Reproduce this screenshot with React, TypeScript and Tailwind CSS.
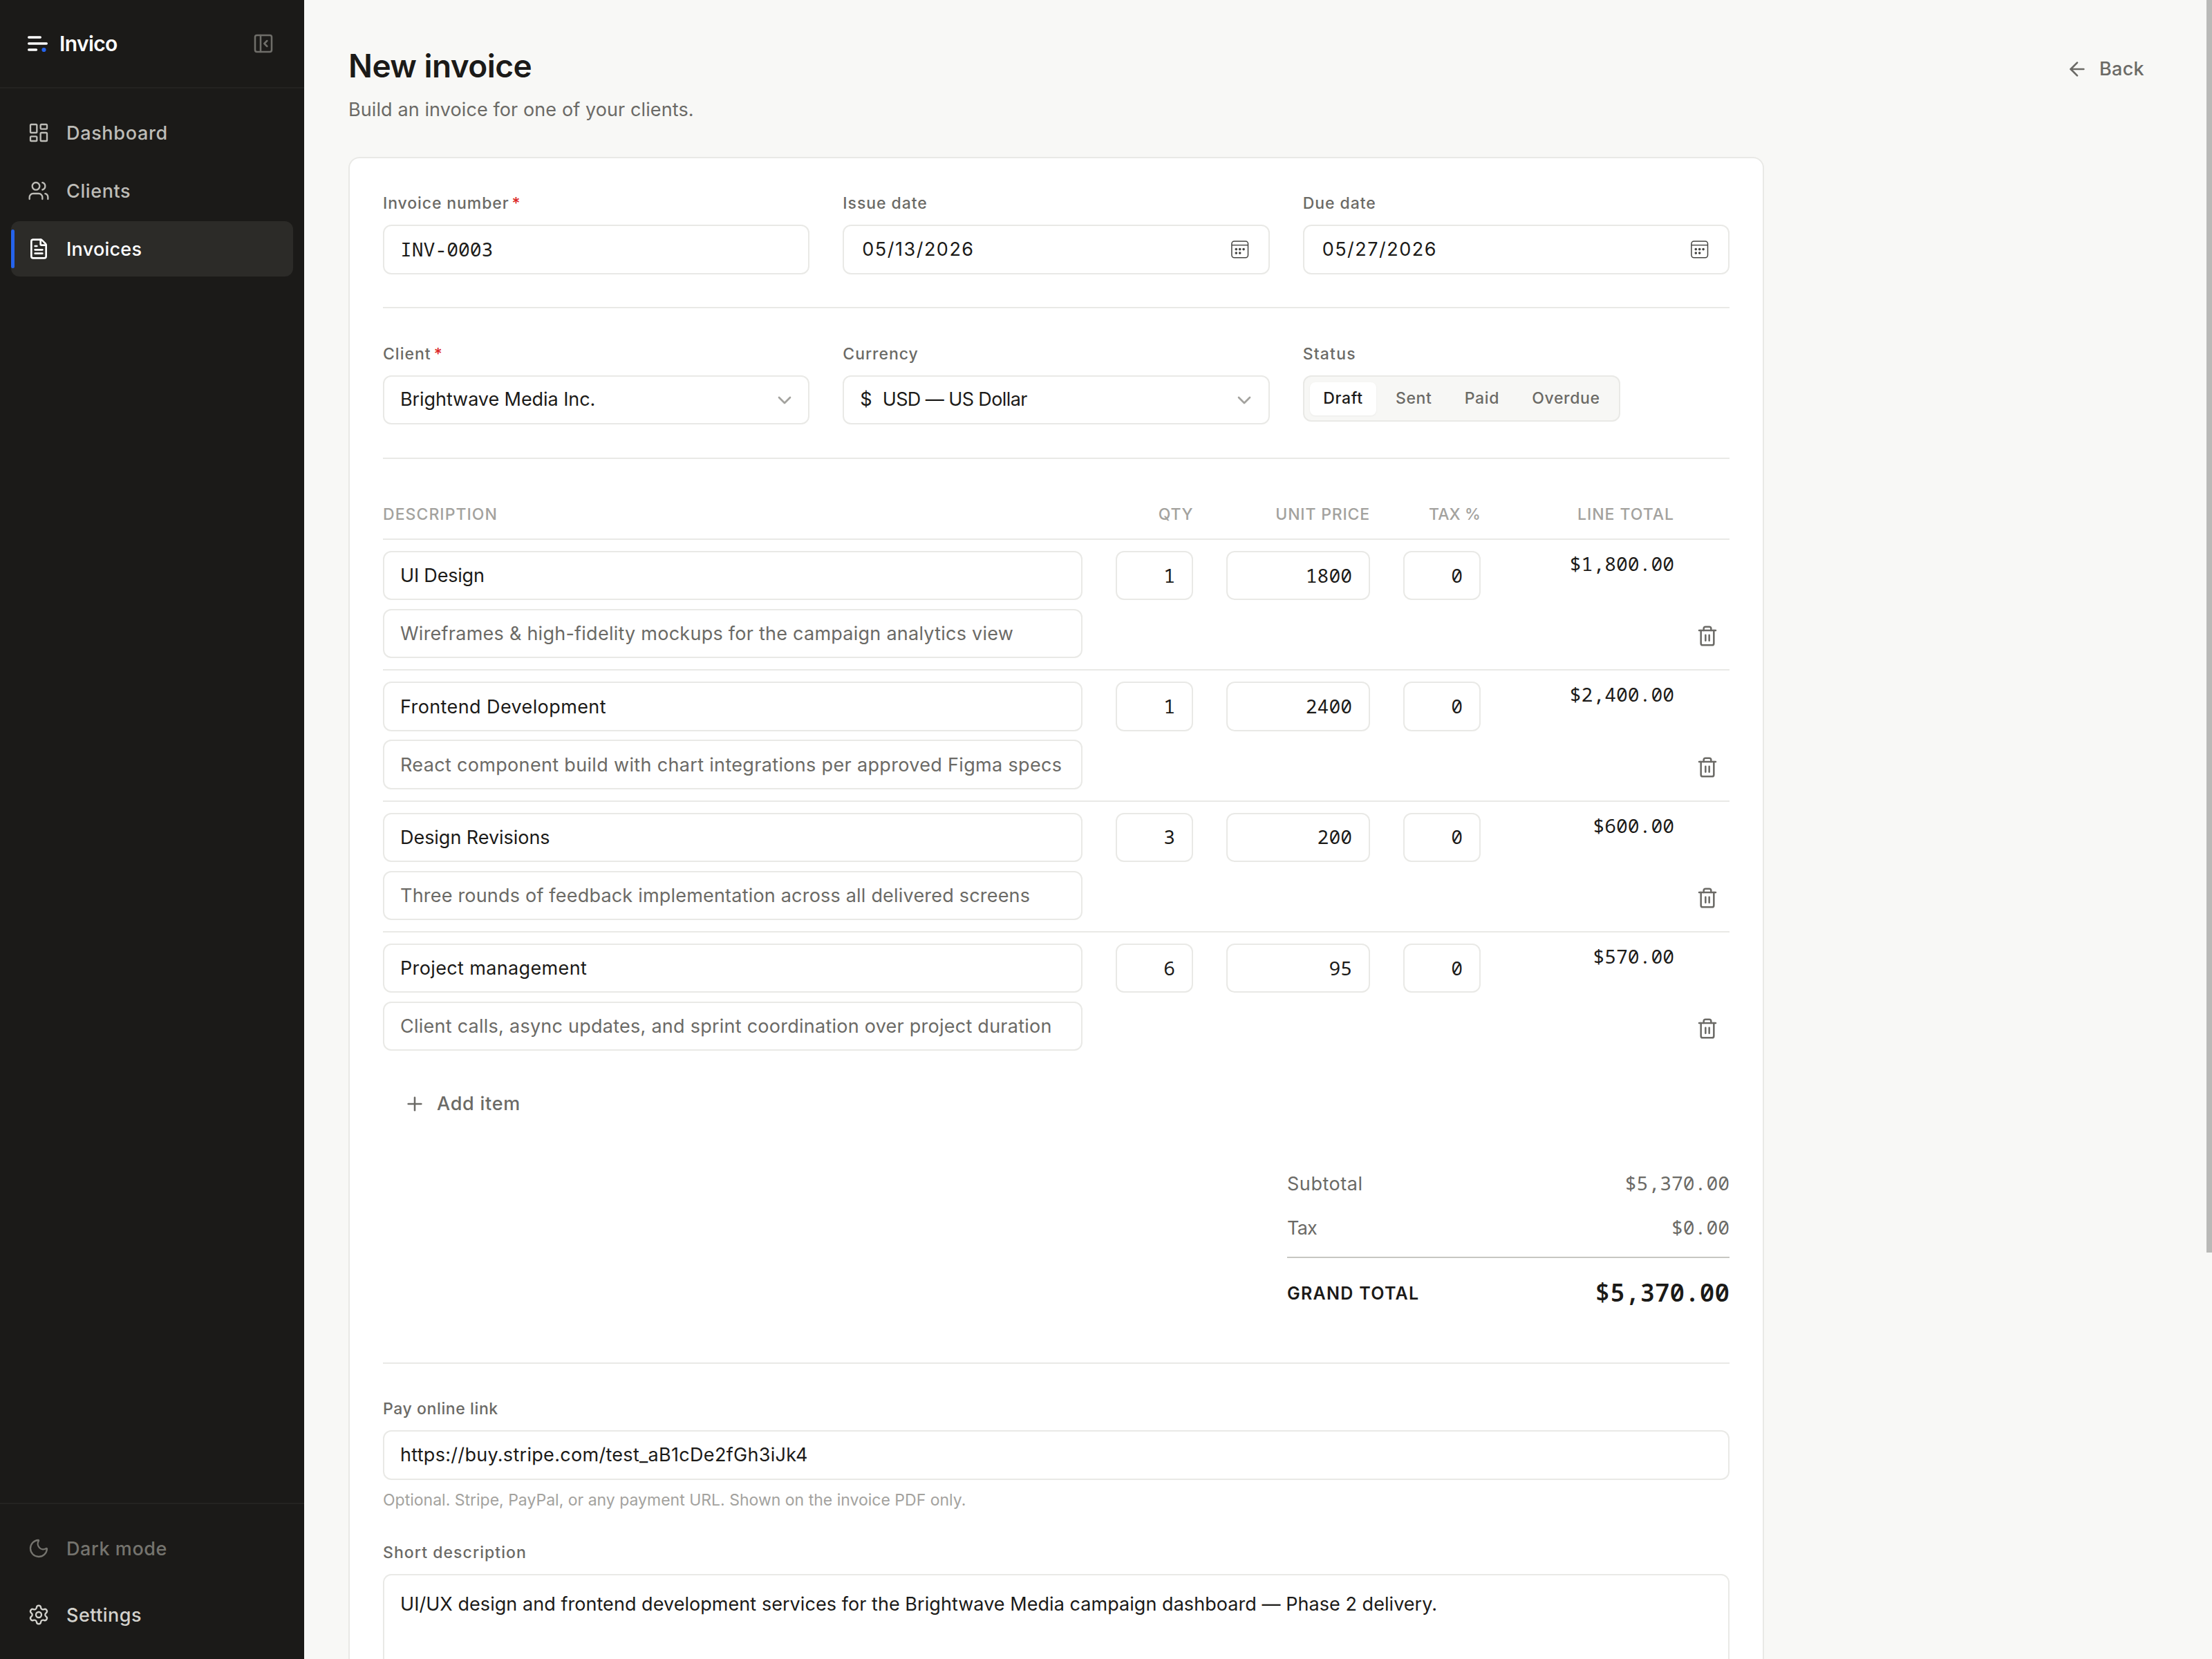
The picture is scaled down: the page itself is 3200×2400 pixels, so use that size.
import { ArrowLeft, ChevronDown, FileText, LayoutDashboard, Moon, PanelLeftClose, Plus, Settings, Trash2, Users } from "lucide-react"
import type { ReactNode } from "react"
import clsx from "clsx"

const navItems = [
  { icon: LayoutDashboard, label: "Dashboard", active: false, tracking: "tracking-[0.67px]" },
  { icon: Users, label: "Clients", active: false, tracking: "tracking-[0.59px]" },
  { icon: FileText, label: "Invoices", active: true, tracking: "tracking-[0.25px]" },
]

const lineItems = [
  {
    name: "UI Design",
    nameTracking: "tracking-[-0.19px]",
    details: "Wireframes & high-fidelity mockups for the campaign analytics view",
    detailsTracking: "tracking-[0.25px]",
    qty: "1",
    price: "1800",
    tax: "0",
    total: "$1,800.00",
  },
  {
    name: "Frontend Development",
    nameTracking: "tracking-[0.4px]",
    details: "React component build with chart integrations per approved Figma specs",
    detailsTracking: "tracking-[0.33px]",
    qty: "1",
    price: "2400",
    tax: "0",
    total: "$2,400.00",
  },
  {
    name: "Design Revisions",
    nameTracking: "tracking-[-0.04px]",
    details: "Three rounds of feedback implementation across all delivered screens",
    detailsTracking: "tracking-[0.2px]",
    qty: "3",
    price: "200",
    tax: "0",
    total: "$600.00",
  },
  {
    name: "Project management",
    nameTracking: "tracking-[0.36px]",
    details: "Client calls, async updates, and sprint coordination over project duration",
    detailsTracking: "tracking-[0.25px]",
    qty: "6",
    price: "95",
    tax: "0",
    total: "$570.00",
  },
]

const statuses = [
  { label: "Draft", active: true },
  { label: "Sent", active: false },
  { label: "Paid", active: false },
  { label: "Overdue", active: false },
]

const mono = "font-['Noto_Sans_Mono','Liberation_Mono',monospace] [font-feature-settings:'zero'] text-[28px]"
const tableGrid = "grid grid-cols-[1012px_112px_208px_112px_232px] gap-x-12"

function Logo() {
  return (
    <svg width="32" height="32" viewBox="0 0 32 32" fill="none" className="shrink-0">
      <path d="M1.7 7h16.6M1.7 16h25.6M1.7 25h10.8" stroke="#fff" strokeWidth="3.4" strokeLinecap="round" />
      <circle cx="23.5" cy="25" r="3.1" fill="#2563eb" />
    </svg>
  )
}

function CalendarIcon() {
  return (
    <svg width="26" height="26" viewBox="0 0 26 26" fill="none" className="shrink-0">
      <rect x="0.9" y="0.9" width="23.6" height="23.8" rx="3.6" stroke="#444442" strokeWidth="1.5" />
      <path d="M1 6.6h23.5" stroke="#444442" strokeWidth="1.4" />
      <g fill="#444442">
        <circle cx="7.3" cy="12.6" r="1.8" />
        <circle cx="12.7" cy="12.6" r="1.8" />
        <circle cx="18.1" cy="12.6" r="1.8" />
        <circle cx="7.3" cy="18.1" r="1.8" />
        <circle cx="12.7" cy="18.1" r="1.8" />
      </g>
    </svg>
  )
}

function Label({ children, className, required }: { children: ReactNode; className?: string; required?: boolean }) {
  return (
    <div className="flex h-8 items-center gap-1 text-[23px] font-[450] text-[#6b6a66]">
      <span className={className}>{children}</span>
      {required && <span className="text-[#dc2626]">*</span>}
    </div>
  )
}

function Box({ children, className }: { children?: ReactNode; className?: string }) {
  return (
    <div className={clsx("flex items-center rounded-xl border-2 border-[#e9e9e6] bg-white pl-[23px] whitespace-nowrap", className)}>
      {children}
    </div>
  )
}

function Sidebar() {
  return (
    <aside className="flex h-full w-[440px] shrink-0 flex-col bg-[#1b1a18]">
      <div className="flex h-32 items-center border-b-2 border-[#242321] pr-[43px] pl-10">
        <Logo />
        <span className="ml-[14px] text-[30px] font-semibold tracking-[-0.62px] text-white">Invico</span>
        <PanelLeftClose size={32} strokeWidth={1.9} className="ml-auto text-[#6f6e69]" />
      </div>

      <nav className="flex flex-col gap-1 px-4 pt-6">
        {navItems.map((item) => (
          <div
            key={item.label}
            className={clsx(
              "relative flex h-20 items-center gap-6 rounded-xl pl-6 text-[27px]",
              item.active ? "bg-[#2c2b28] font-medium text-white" : "font-[450] text-[#bdbcb7]",
            )}
          >
            {item.active && <span className="absolute top-3 left-0 h-14 w-[5px] rounded-[3px] bg-[#2563eb]" />}
            <item.icon size={32} strokeWidth={item.active ? 2 : 1.75} />
            <span className={clsx("pt-0.5", item.tracking)}>{item.label}</span>
          </div>
        ))}
      </nav>

      <div className="mt-auto flex flex-col gap-4 border-t-2 border-[#242321] px-4 py-6 text-[27px]">
        <div className="flex h-20 items-center gap-6 pl-6 font-[450] text-[#75746e]">
          <Moon size={32} strokeWidth={1.75} />
          <span className="pt-0.5 tracking-[0.57px]">Dark mode</span>
        </div>
        <div className="flex h-20 items-center gap-6 pl-6 font-medium text-[#d3d2cd]">
          <Settings size={32} strokeWidth={1.75} />
          <span className="pt-0.5 tracking-[0.47px]">Settings</span>
        </div>
      </div>
    </aside>
  )
}

function DateField({ label, value, tracking }: { label: string; value: string; tracking: string }) {
  return (
    <div className="flex flex-col gap-[15px]">
      <Label className="tracking-[0.95px]">{label}</Label>
      <Box className="h-[72px] justify-between pr-7">
        <span className={clsx("pl-[3px]", tracking)}>{value}</span>
        <CalendarIcon />
      </Box>
    </div>
  )
}

export default function App() {
  return (
    <div className="flex h-[2400px] w-[3200px] overflow-hidden bg-[#f8f8f6] font-[Inter,sans-serif] text-[27px] text-[#1b1a18]">
      <Sidebar />

      <main className="flex flex-1 flex-col pt-[65px] pl-16">
        <div className="flex justify-between pr-[90px]">
          <div>
            <h1 className="flex h-[60px] items-center text-[46px] font-semibold tracking-[-0.55px]">New invoice</h1>
            <p className="mt-[11px] flex h-11 items-center pt-0.5 tracking-[0.1px] text-[#6b6a66]">
              Build an invoice for one of your clients.
            </p>
          </div>
          <div className="flex h-[70px] items-center gap-4 font-[450] text-[#6b6a66]">
            <ArrowLeft size={32} strokeWidth={2} />
            <span className="tracking-[0.3px]">Back</span>
          </div>
        </div>

        <div className="mt-[47px] h-[2300px] w-[2048px] shrink-0 rounded-2xl border-2 border-[#e9e9e6] bg-white px-12 pt-[49px]">
          <div className="grid grid-cols-3 gap-12 border-b-2 border-[#e9e9e6] pb-[47px]">
            <div className="flex flex-col gap-[15px]">
              <Label className="tracking-[0.9px]" required>
                Invoice number
              </Label>
              <Box className={clsx("h-[72px] pb-0.5", mono)}>INV-0003</Box>
            </div>
            <DateField label="Issue date" value="05/13/2026" tracking="tracking-[1.5px]" />
            <DateField label="Due date" value="05/27/2026" tracking="tracking-[1.5px]" />
          </div>

          <div className="grid grid-cols-3 gap-12 border-b-2 border-[#e9e9e6] pt-[50px] pb-12">
            <div className="flex flex-col gap-[15px]">
              <Label className="tracking-[1px]" required>
                Client
              </Label>
              <Box className="h-[71px] justify-between pr-[18px]">
                <span className="tracking-[-0.07px]">Brightwave Media Inc.</span>
                <ChevronDown size={32} strokeWidth={2} className="text-[#a3a29e]" />
              </Box>
            </div>
            <div className="flex flex-col gap-[15px]">
              <Label className="tracking-[0.95px]">Currency</Label>
              <Box className="h-[71px] justify-between pr-[19px]">
                <span className="flex gap-[15px]">
                  <span>$</span>
                  <span className="tracking-[-0.6px]">USD — US Dollar</span>
                </span>
                <ChevronDown size={32} strokeWidth={2} className="text-[#a3a29e]" />
              </Box>
            </div>
            <div className="flex flex-col items-start gap-[15px]">
              <Label className="tracking-[1.2px]">Status</Label>
              <div className="flex h-[67px] items-center gap-2 rounded-xl border-2 border-[#e9e9e6] bg-[#f7f7f5] px-2 text-[23px] tracking-[0.65px]">
                {statuses.map((s) => (
                  <span
                    key={s.label}
                    className={clsx(
                      "flex h-12 items-center rounded-lg px-[19.6px]",
                      s.active
                        ? "bg-white font-medium text-[#1b1a18] shadow-[0_1px_3px_rgba(0,0,0,0.05)]"
                        : "font-[450] text-[#6b6a66]",
                    )}
                  >
                    {s.label}
                  </span>
                ))}
              </div>
            </div>
          </div>

          <div
            className={clsx(
              tableGrid,
              "border-b-2 border-[#e9e9e6] pt-16 pb-[19px] text-right text-[23px] leading-8 font-[450] text-[#a3a29e]",
            )}
          >
            <span className="text-left tracking-[1.05px]">DESCRIPTION</span>
            <span className="tracking-[0.6px]">QTY</span>
            <span className="tracking-[0.82px]">UNIT PRICE</span>
            <span className="tracking-[0.1px]">TAX %</span>
            <span className="tracking-[0.97px]">LINE TOTAL</span>
          </div>

          {lineItems.map((item) => (
            <div
              key={item.name}
              className="flex items-stretch justify-between border-b-2 border-[#e9e9e6] py-4 has-[+button]:border-b-0"
            >
              <div className={clsx(tableGrid, "items-start")}>
                <div className="flex flex-col gap-[12.67px]">
                  <Box className="h-[71.33px] pt-0.5">
                    <span className={item.nameTracking}>{item.name}</span>
                  </Box>
                  <Box className="h-[71.33px] pt-0.5 text-[#6b6a66]">
                    <span className={item.detailsTracking}>{item.details}</span>
                  </Box>
                </div>
                <Box className={clsx("h-[71.33px] justify-end pr-6 pb-0.5", mono)}>{item.qty}</Box>
                <Box className={clsx("h-[71.33px] justify-end pr-6 pb-0.5", mono)}>{item.price}</Box>
                <Box className={clsx("h-[71.33px] justify-end pr-6 pb-0.5", mono)}>{item.tax}</Box>
                <span className={clsx("text-right leading-[37px]", mono)}>{item.total}</span>
              </div>
              <span className="flex size-16 items-center justify-center self-end text-[#6b6a66]">
                <Trash2 size={32} strokeWidth={1.9} />
              </span>
            </div>
          ))}

          <button className="mt-[25px] flex h-[72px] items-center gap-4 pl-[30px] font-[450] text-[#6b6a66]">
            <Plus size={32} strokeWidth={1.9} />
            <span className="tracking-[0.75px]">Add item</span>
          </button>

          <div className="mt-[59px] ml-auto flex w-[640px] flex-col text-[#6b6a66]">
            <div className="flex h-10 items-center justify-between">
              <span className="pt-0.5 tracking-[0.55px]">Subtotal</span>
              <span className={clsx("pb-0.5", mono)}>$5,370.00</span>
            </div>
            <div className="mt-6 flex h-10 items-center justify-between">
              <span className="pt-0.5 tracking-[-0.8px]">Tax</span>
              <span className={clsx("pb-0.5", mono)}>$0.00</span>
            </div>
            <div className="mt-[22px] flex h-[77px] items-end justify-between border-t-2 border-[#c6c6c2] text-[#1b1a18]">
              <span className="text-[25px] leading-[48px] font-semibold tracking-[1.28px]">GRAND TOTAL</span>
              <span className="font-['Noto_Sans_Mono','Liberation_Mono',monospace] text-[36px] leading-[50px] font-semibold [font-feature-settings:'zero']">
                $5,370.00
              </span>
            </div>
          </div>

          <div className="mt-[76px] border-t-2 border-[#e9e9e6] pt-[49px]">
            <Label className="tracking-[0.6px]">Pay online link</Label>
            <Box className="mt-[15px] h-[72px]">
              <span className="tracking-[0.3px]">https://buy.stripe.com/test_aB1cDe2fGh3iJk4</span>
            </Box>
            <p className="mt-[13px] text-[23px] leading-8 text-[#a3a29e]">
              Optional. Stripe, PayPal, or any payment URL. Shown on the invoice PDF only.
            </p>
          </div>

          <div className="mt-11">
            <Label className="tracking-[1.07px]">Short description</Label>
            <Box className="mt-[15px] h-[200px] items-start pt-[22px] leading-10">
              <span className="tracking-[0.05px]">
                UI/UX design and frontend development services for the Brightwave Media campaign dashboard — Phase 2 delivery.
              </span>
            </Box>
          </div>
        </div>
      </main>

      {/* scrollbar */}
      <div className="h-full w-2 shrink-0">
        <div className="h-[1812px] bg-[#b9b9b7]" />
      </div>
    </div>
  )
}
